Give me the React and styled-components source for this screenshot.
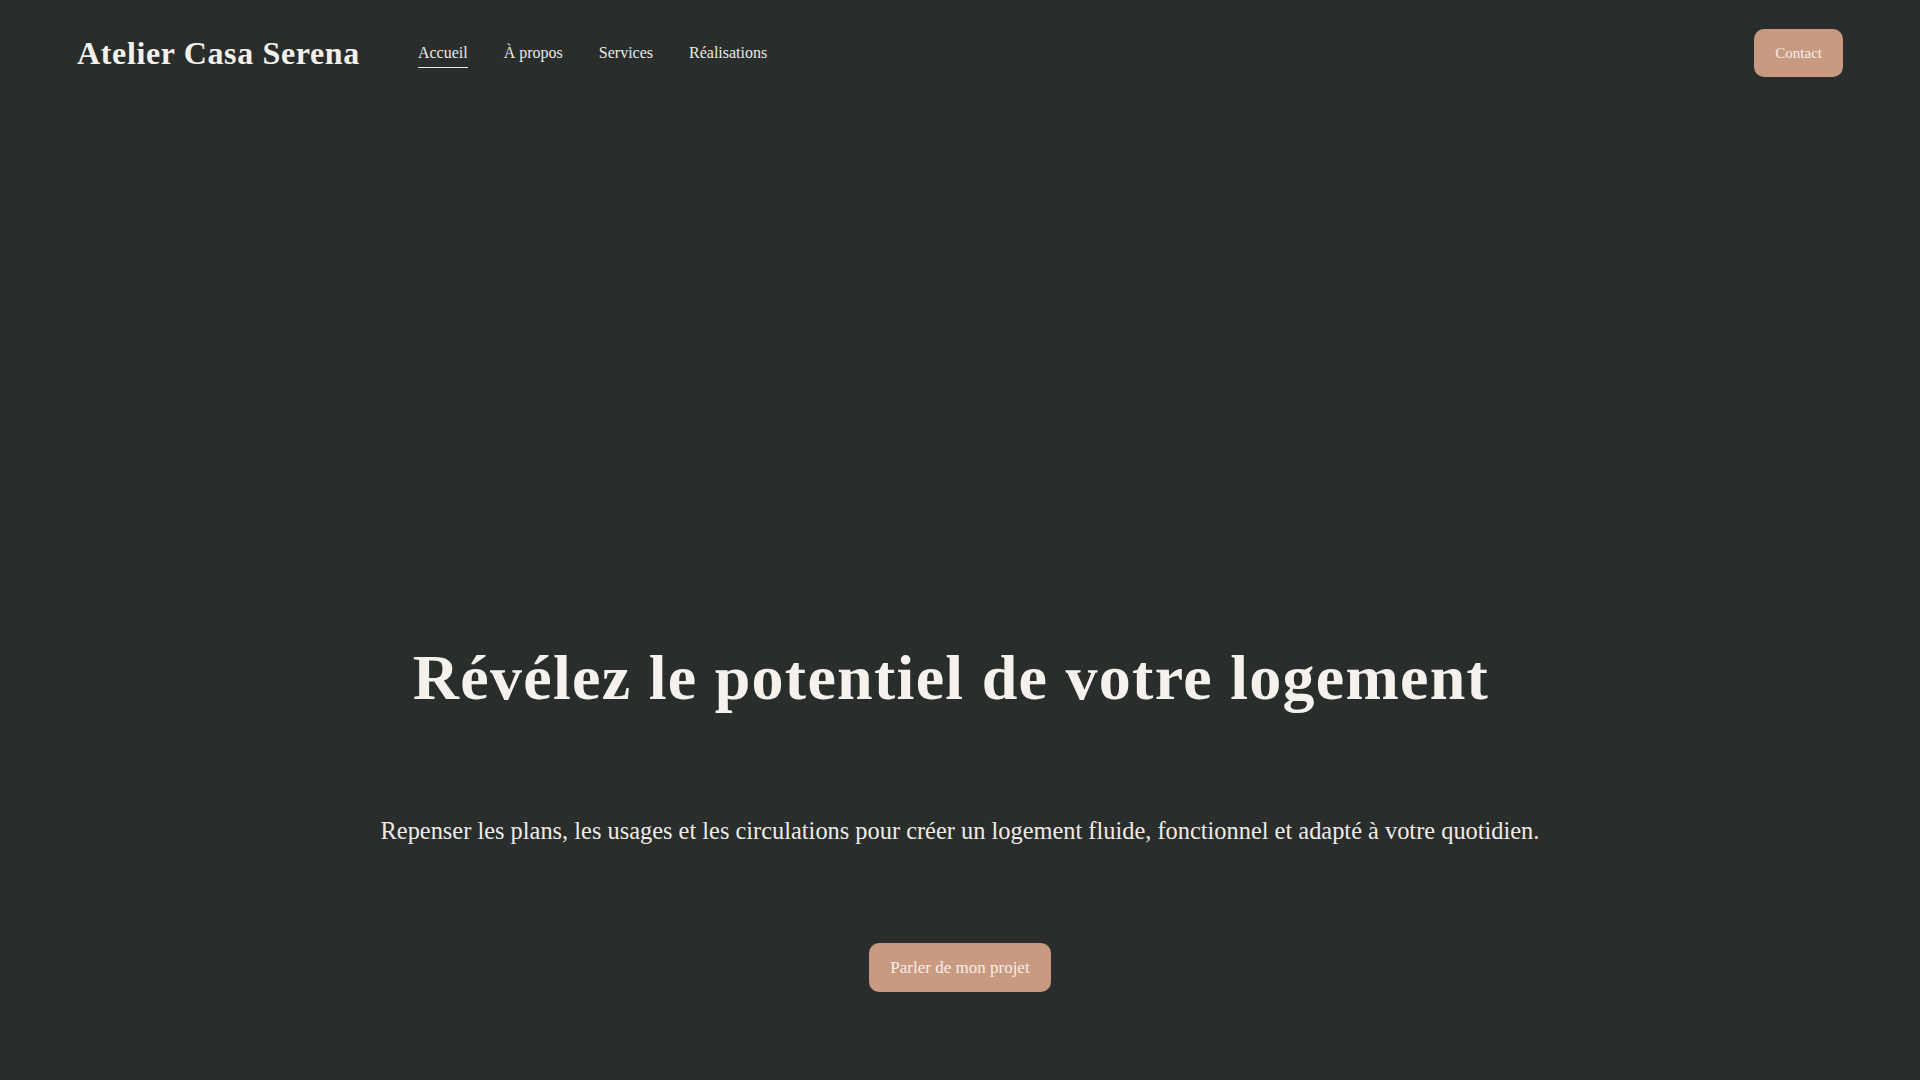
import React from 'react';
import styled, { createGlobalStyle } from 'styled-components';

const GlobalStyle = createGlobalStyle`
  * { box-sizing: border-box; }
  html, body { margin: 0; padding: 0; }
  body {
    background: #292d2c;
    color: #f4f0eb;
    font-family: "Liberation Serif", "Times New Roman", serif;
  }
`;

const Page = styled.div`
  min-height: 100vh;
  display: flex;
  flex-direction: column;
`;

const Header = styled.header`
  display: flex;
  align-items: center;
  padding: 29px 77px;
`;

const Logo = styled.a`
  font-size: 32px;
  font-weight: 700;
  letter-spacing: 0.02em;
  color: #f4f0eb;
  text-decoration: none;
  line-height: 1;
`;

const Nav = styled.nav`
  display: flex;
  gap: 36px;
  margin-left: 58px;
`;

const NavLink = styled.a`
  position: relative;
  font-size: 16px;
  color: #ece8e3;
  text-decoration: none;
  line-height: 20px;

  &::after {
    content: '';
    position: absolute;
    left: 0;
    right: 0;
    bottom: -5px;
    height: 1.5px;
    background: #ece8e3;
    opacity: ${(p) => (p.$active ? 1 : 0)};
  }
`;

const Button = styled.a`
  display: inline-block;
  background: #c89a82;
  color: #f8eee6;
  text-decoration: none;
  border-radius: 10px;
  font-size: ${(p) => (p.$large ? '17px' : '15px')};
  line-height: ${(p) => (p.$large ? '21px' : '20px')};
  padding: 14px 21px;
`;

const HeaderCta = styled(Button)`
  margin-left: auto;
`;

const Hero = styled.section`
  flex: 1;
  display: flex;
  flex-direction: column;
  align-items: center;
  justify-content: flex-end;
  text-align: center;
  padding: 0 77px 88px;
`;

const Title = styled.h1`
  margin: 0 18px 100px 0;
  font-size: 64px;
  line-height: 1.1;
  font-weight: 700;
  letter-spacing: 0.02em;
  color: #f5f1ec;
`;

const Lead = styled.p`
  margin: 0 0 93.5px;
  font-size: 24.4px;
  line-height: 1.5;
  color: #efebe6;
`;

export default function App() {
  return (
    <Page>
      <GlobalStyle />
      <Header>
        <Logo href="#">Atelier Casa Serena</Logo>
        <Nav>
          <NavLink href="#" $active>Accueil</NavLink>
          <NavLink href="#">À propos</NavLink>
          <NavLink href="#">Services</NavLink>
          <NavLink href="#">Réalisations</NavLink>
        </Nav>
        <HeaderCta href="#">Contact</HeaderCta>
      </Header>
      <Hero>
        <Title>Révélez le potentiel de votre logement</Title>
        <Lead>
          Repenser les plans, les usages et les circulations pour créer un logement fluide,
          fonctionnel et adapté à votre quotidien.
        </Lead>
        <Button href="#" $large>Parler de mon projet</Button>
      </Hero>
    </Page>
  );
}
